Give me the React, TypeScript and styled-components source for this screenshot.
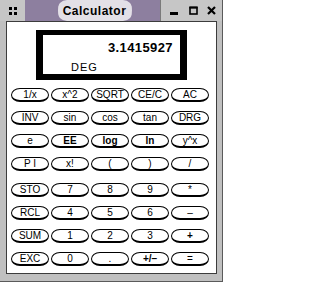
import styled, { createGlobalStyle } from 'styled-components';

const GlobalStyle = createGlobalStyle`
  html, body {
    margin: 0;
    padding: 0;
    background: #ffffff;
  }
  * {
    box-sizing: border-box;
  }
`;

const Window = styled.div`
  width: 223px;
  height: 282px;
  display: flex;
  flex-direction: column;
  background: #c0c0c0;
  border-right: 1px solid #5a5a5a;
  border-bottom: 1px solid #5a5a5a;
  font-family: 'Liberation Sans', Arial, sans-serif;
`;

const TitleBar = styled.div`
  height: 21px;
  display: flex;
  flex-shrink: 0;
`;

const MenuBox = styled.div`
  width: 25px;
  display: flex;
  align-items: center;
  justify-content: center;
  background: #c6c6c6;
`;

const TitleArea = styled.div`
  flex: 1;
  display: flex;
  align-items: stretch;
  justify-content: center;
  padding-left: 4px;
  background: #8d7f9f;
`;

const TitleTab = styled.div`
  position: relative;
  width: 76px;
  display: flex;
  align-items: center;
  justify-content: center;
  background: #e3e0e7;
  border-radius: 10px / 50%;
  font-size: 12px;
  font-weight: bold;
  letter-spacing: 0.5px;
  color: #000000;

  &::before,
  &::after {
    content: '';
    position: absolute;
    top: 1px;
    bottom: 1px;
    width: 8px;
    border-radius: 50%;
  }
  &::before {
    left: -1px;
    border-left: 2px solid #8d7f9f;
  }
  &::after {
    right: -1px;
    border-right: 2px solid #8d7f9f;
  }
`;

const Controls = styled.div`
  width: 62px;
  display: flex;
  align-items: center;
  justify-content: space-between;
  padding: 0 6px 0 9px;
  background: #c6c6c6;
  border-left: 1px solid #7a7a7a;
`;

const Frame = styled.div`
  flex: 1;
  display: flex;
  padding: 0 5px 7px 6px;
`;

const Client = styled.div`
  flex: 1;
  display: flex;
  flex-direction: column;
  align-items: flex-start;
  background: #ffffff;
  border: 1px solid #3c3c3c;
`;

const Display = styled.div`
  align-self: center;
  width: 151px;
  height: 50px;
  margin-top: 8px;
  display: flex;
  flex-direction: column;
  border-style: solid;
  border-color: #000000;
  border-width: 5px 7px 6px 7px;
  background: #ffffff;
  padding: 6px 7px 0 28px;
`;

const Value = styled.div`
  text-align: right;
  font-size: 13px;
  line-height: 13px;
  font-weight: bold;
  letter-spacing: 0.4px;
  color: #000000;
`;

const Mode = styled.div`
  margin-top: 8px;
  font-size: 11px;
  line-height: 11px;
  letter-spacing: 1px;
  color: #000000;
`;

const Keys = styled.div<{ $top: number }>`
  display: grid;
  grid-template-columns: repeat(5, 38px);
  grid-auto-rows: 14px;
  column-gap: 2px;
  row-gap: 9px;
  margin-top: ${(p) => p.$top}px;
  margin-left: 4px;
`;

const Key = styled.button<{ $bold?: boolean }>`
  display: flex;
  align-items: center;
  justify-content: center;
  padding: 0;
  margin: 0;
  height: 14px;
  background: #ffffff;
  border: 1px solid #000000;
  border-bottom-width: 2px;
  border-radius: 9px / 50%;
  font-family: 'Liberation Sans', Arial, sans-serif;
  font-size: 10px;
  line-height: 10px;
  font-weight: ${(p) => (p.$bold ? 'bold' : 'normal')};
  color: #000000;
`;

const functionKeys = [
  ['1/x', 'x^2', 'SQRT', 'CE/C', 'AC'],
  ['INV', 'sin', 'cos', 'tan', 'DRG'],
  ['e', 'EE', 'log', 'ln', 'y^x'],
  ['P I', 'x!', '(', ')', '/'],
];

const numberKeys = [
  ['STO', '7', '8', '9', '*'],
  ['RCL', '4', '5', '6', '\u2013'],
  ['SUM', '1', '2', '3', '+'],
  ['EXC', '0', '.', '+/\u2013', '='],
];

const boldKeys = ['log', 'ln', '+', '+/\u2013', 'EE'];

const MenuIcon = () => (
  <svg width="8" height="8" viewBox="0 0 8 8">
    <rect x="0" y="0" width="3" height="3" fill="#000" />
    <rect x="5" y="0" width="3" height="3" fill="#000" />
    <rect x="0" y="5" width="3" height="3" fill="#000" />
    <rect x="5" y="5" width="3" height="3" fill="#000" />
  </svg>
);

const MinimizeIcon = () => (
  <svg width="9" height="9" viewBox="0 0 9 9">
    <rect x="0" y="6" width="8" height="3" fill="#000" />
  </svg>
);

const MaximizeIcon = () => (
  <svg width="9" height="9" viewBox="0 0 9 9">
    <rect x="1" y="1.5" width="7" height="6.5" fill="none" stroke="#000" strokeWidth="1.6" />
    <rect x="0.5" y="0.5" width="8" height="2" fill="#000" />
  </svg>
);

const CloseIcon = () => (
  <svg width="9" height="9" viewBox="0 0 9 9">
    <path d="M1 1 L8 8 M8 1 L1 8" stroke="#000" strokeWidth="2.2" />
  </svg>
);

export default function App() {
  return (
    <>
      <GlobalStyle />
      <Window>
        <TitleBar>
          <MenuBox>
            <MenuIcon />
          </MenuBox>
          <TitleArea>
            <TitleTab>Calculator</TitleTab>
          </TitleArea>
          <Controls>
            <MinimizeIcon />
            <MaximizeIcon />
            <CloseIcon />
          </Controls>
        </TitleBar>
        <Frame>
          <Client>
            <Display>
              <Value>3.1415927</Value>
              <Mode>DEG</Mode>
            </Display>
            <Keys $top={8}>
              {functionKeys.flat().map((label, idx) => (
                <Key key={idx} $bold={boldKeys.includes(label)}>
                  {label}
                </Key>
              ))}
            </Keys>
            <Keys $top={12}>
              {numberKeys.flat().map((label, idx) => (
                <Key key={idx} $bold={boldKeys.includes(label)}>
                  {label}
                </Key>
              ))}
            </Keys>
          </Client>
        </Frame>
      </Window>
    </>
  );
}
